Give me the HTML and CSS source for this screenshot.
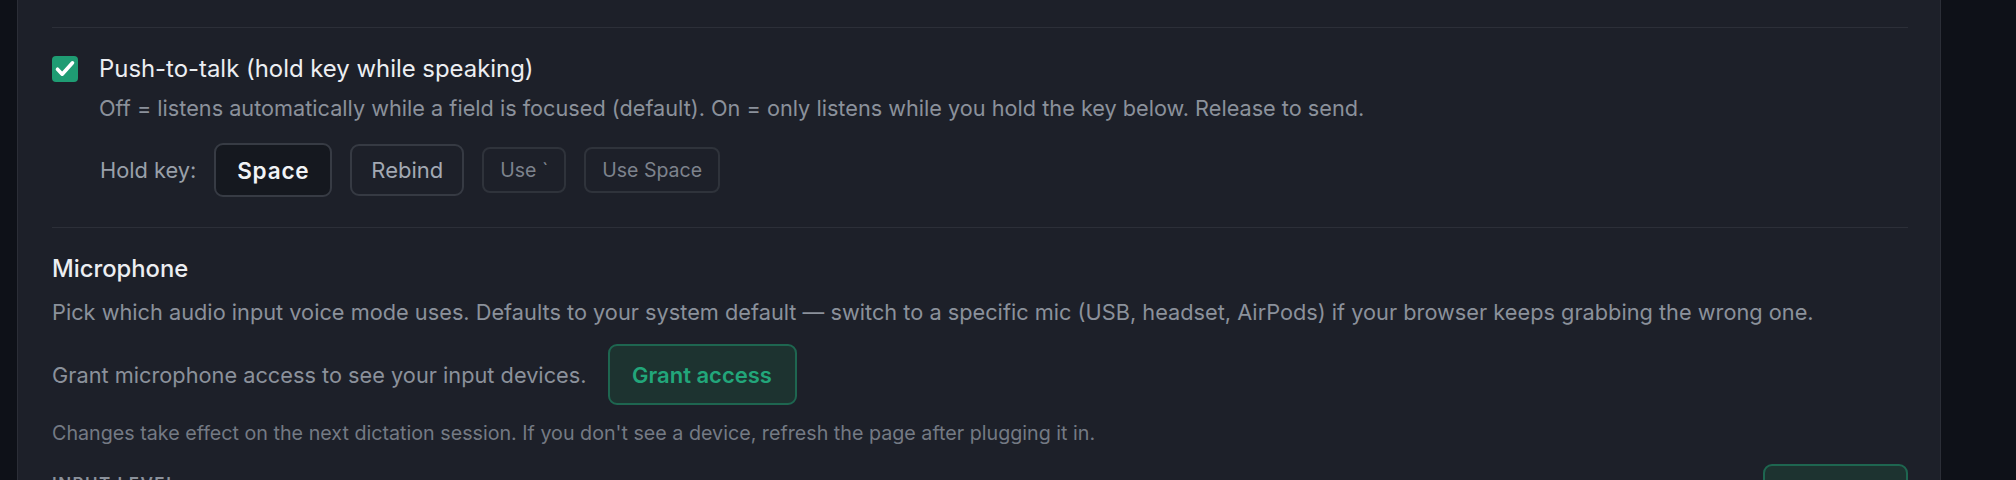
FILE: index.html
```html
<!DOCTYPE html>
<html lang="en">
<head>
<meta charset="utf-8">
<title>Voice settings</title>
<link rel="stylesheet" href="styles.css">
</head>
<body>
<div class="page">
  <main class="panel">
    <section class="section ptt">
      <label class="check-row">
        <span class="checkbox">
          <svg viewBox="0 0 26 26" width="26" height="26" aria-hidden="true"><path d="M5.5 13.2 L10.2 18.2 L20.5 6.8" fill="none" stroke="#ffffff" stroke-width="3.6" stroke-linecap="round" stroke-linejoin="round"/></svg>
        </span>
        <span class="check-title">Push-to-talk (hold key while speaking)</span>
      </label>
      <p class="check-desc">Off = listens automatically while a field is focused (default). On = only listens while you hold the key below. Release to send.</p>
      <div class="key-row">
        <span class="key-label">Hold key:</span>
        <kbd class="key-current">Space</kbd>
        <button class="btn btn-outline">Rebind</button>
        <button class="btn btn-small">Use `</button>
        <button class="btn btn-small">Use Space</button>
      </div>
    </section>
    <section class="section mic">
      <h3 class="section-title">Microphone</h3>
      <p class="section-desc">Pick which audio input voice mode uses. Defaults to your system default — switch to a specific mic (USB, headset, AirPods) if your browser keeps grabbing the wrong one.</p>
      <div class="grant-row">
        <span class="grant-text">Grant microphone access to see your input devices.</span>
        <button class="btn btn-green">Grant access</button>
      </div>
      <p class="note">Changes take effect on the next dictation session. If you don't see a device, refresh the page after plugging it in.</p>
      <div class="level-row">
        <span class="level-label">INPUT LEVEL</span>
        <button class="btn btn-green btn-test">Test</button>
      </div>
    </section>
  </main>
</div>
</body>
</html>
```

FILE: styles.css
```css
html, body {
  margin: 0;
  padding: 0;
  background: #0e1118;
  height: 480px;
  overflow: hidden;
}

body {
  font-family: Inter, "Noto Sans", "Liberation Sans", sans-serif;
  color: #e8eaee;
}

.page {
  display: flex;
  padding-left: 17px;
  height: 480px;
}

.panel {
  width: 1924px;
  box-sizing: border-box;
  background: #1d2029;
  border-left: 1px solid #2b2e37;
  border-right: 1px solid #2b2e37;
  padding: 27px 32px 0 34px;
}

.section {
  border-top: 1px solid #2c2f38;
}

.ptt {
  padding: 26px 0 30px;
}

.check-row {
  display: flex;
  align-items: center;
  gap: 21px;
  height: 30px;
}

.checkbox {
  width: 26px;
  height: 26px;
  border-radius: 4px;
  background: #1f9c73;
  display: flex;
  flex: none;
}

.check-title {
  font-size: 23.9px;
  line-height: 30px;
  font-weight: 400;
  color: #eceef2;
}

.check-desc {
  margin: 10px 0 0 47px;
  font-size: 21.7px;
  line-height: 28px;
  color: #8b919b;
}

.key-row {
  display: flex;
  align-items: center;
  gap: 18px;
  margin: 21px 0 0 48px;
  height: 54px;
}

.key-label {
  font-size: 21.8px;
  color: #9aa0aa;
}

.key-current {
  font-family: Inter, "Noto Sans", sans-serif;
  font-size: 22.5px;
  font-weight: 600;
  letter-spacing: 0.8px;
  color: #f1f3f6;
  background: #15181f;
  border: 2px solid #373b44;
  border-radius: 9px;
  box-sizing: border-box;
  width: 118px;
  height: 54px;
  display: flex;
  align-items: center;
  justify-content: center;
}

.btn {
  font-family: Inter, "Noto Sans", sans-serif;
  background: transparent;
  cursor: pointer;
  box-sizing: border-box;
  display: flex;
  align-items: center;
  justify-content: center;
}

.btn-outline {
  font-size: 22px;
  color: #a3a9b3;
  border: 2px solid #363a43;
  border-radius: 9px;
  height: 52px;
  width: 114px;
}

.btn-small {
  font-size: 19.5px;
  color: #7d838d;
  border: 2px solid #2f333b;
  border-radius: 8px;
  height: 46px;
  padding: 0 16px;
}

.mic {
  padding: 26px 0 0;
}

.section-title {
  margin: 0;
  font-size: 23.8px;
  line-height: 30px;
  font-weight: 500;
  color: #eceef2;
}

.section-desc {
  margin: 13px 0 0;
  font-size: 21.75px;
  line-height: 30px;
  color: #8b919b;
}

.grant-row {
  display: flex;
  align-items: center;
  gap: 21px;
  margin-top: 17px;
}

.grant-text {
  font-size: 21.75px;
  color: #8b919b;
}

.btn-green {
  font-size: 22px;
  font-weight: 600;
  color: #22a67a;
  background: #1d3330;
  border: 2px solid #1e6650;
  border-radius: 9px;
  height: 61px;
  width: 189px;
}

.note {
  margin: 15px 0 0;
  font-size: 19.7px;
  line-height: 26px;
  color: #747a84;
}

.level-row {
  display: flex;
  justify-content: space-between;
  align-items: flex-start;
  margin-top: 18px;
}

.level-label {
  margin-top: 10px;
  font-size: 17px;
  font-weight: 600;
  letter-spacing: 1.5px;
  color: #8b919b;
}

.btn-test {
  width: 145px;
  height: 56px;
}
```
